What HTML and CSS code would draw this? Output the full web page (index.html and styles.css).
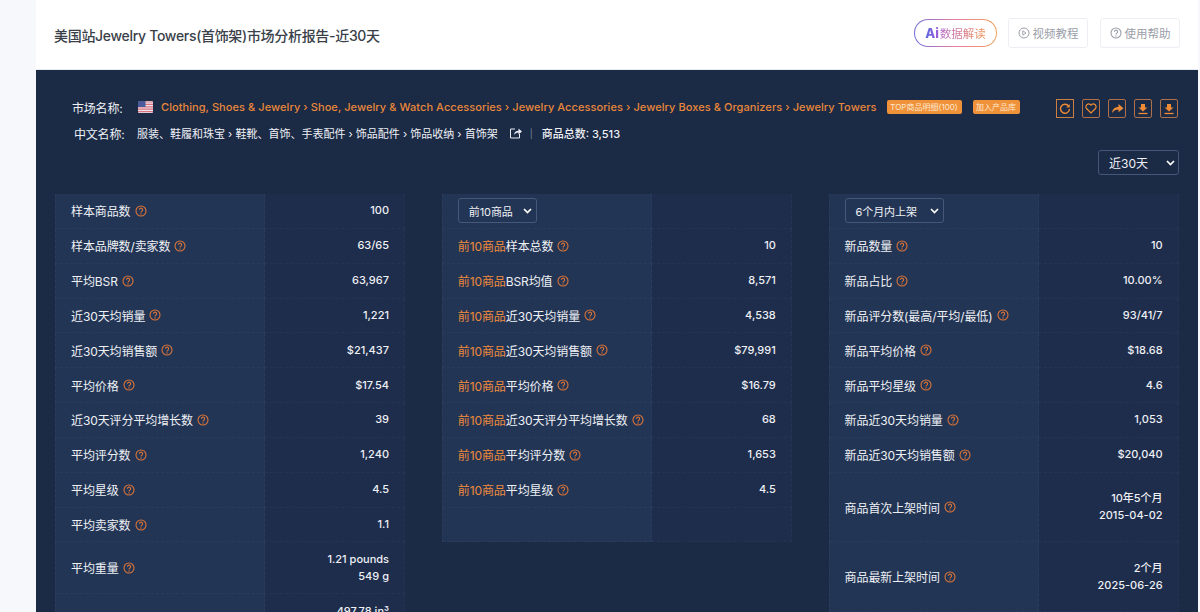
FILE: index.html
```html
<!DOCTYPE html>
<html lang="zh">
<head>
<meta charset="utf-8">
<title>Jewelry Towers</title>
<link rel="stylesheet" href="styles.css">
</head>
<body>
<svg class="defs" width="0" height="0" aria-hidden="true"><defs>
<symbol id="q" viewBox="0 0 12 12"><circle cx="6" cy="6" r="5" fill="none" stroke="currentColor" stroke-width="1.1"/><path d="M4.400 4.800a1.600 1.600 0 1 1 2.500 1.300c-.6.400-.9.700-.9 1.300" fill="none" stroke="currentColor" stroke-width="1.100"/><circle cx="6" cy="9" r=".7" fill="currentColor"/></symbol>
</defs></svg>
<div class="strip"></div>
<main class="main">
  <header class="top">
    <h1 class="title">美国站Jewelry Towers(首饰架)市场分析报告-近30天</h1>
    <div class="top-actions">
      <span class="ai-btn"><span class="ai-inner"><b class="ai-mark">Ai</b><span class="ai-text">数据解读</span></span></span>
      <span class="ghost-btn"><svg width="12" height="12" viewBox="0 0 12 12"><circle cx="6" cy="6" r="5" fill="none" stroke="currentColor"/><path d="M4.800 3.800 8 6 4.800 8.200z" fill="none" stroke="currentColor" stroke-width=".9"/></svg>视频教程</span>
      <span class="ghost-btn"><svg width="12" height="12"><use href="#q"/></svg>使用帮助</span>
    </div>
  </header>
  <section class="panel">
    <div class="info">
      <div class="info-lines">
        <div class="line">
          <span class="key key-a">市场名称:</span>
          <svg class="flag" width="15" height="12" viewBox="0 0 15 12"><rect width="15" height="12" rx="1" fill="#e9e3ea"/><path d="M0 1h15M0 3.400h15M0 5.800h15M0 8.200h15M0 10.600h15" stroke="#d9737f" stroke-width="1.200"/><rect width="7.500" height="6" fill="#4a5a9a"/></svg>
          <span class="crumbs">Clothing, Shoes &amp; Jewelry › Shoe, Jewelry &amp; Watch Accessories › Jewelry Accessories › Jewelry Boxes &amp; Organizers › Jewelry Towers</span>
          <span class="tag tag-top">TOP商品明细(100)</span>
          <span class="tag tag-add">加入产品库</span>
        </div>
        <div class="line line-cn">
          <span class="key">中文名称:</span>
          <span class="cn-crumbs">服装、鞋履和珠宝 › 鞋靴、首饰、手表配件 › 饰品配件 › 饰品收纳 › 首饰架</span>
          <svg class="share" width="13" height="12" viewBox="0 0 13 12"><path d="M6 2H1.500v9h9V7" fill="none" stroke="#e8ebf2" stroke-width="1"/><path d="M5 8c.3-3 2-4.300 4.500-4.300V1.500L13 4.600 9.500 7.500V5.500C7.500 5.500 6 6.500 5 8z" fill="#e8ebf2"/></svg>
          <span class="sep">|</span>
          <span class="total">商品总数: 3,513</span>
        </div>
      </div>
      <div class="tools">
        <span class="tool tool-sq"><svg width="12" height="12" viewBox="0 0 12 12"><path d="M9.700 3.200A4.500 4.500 0 1 0 10.500 6" fill="none" stroke="#f08c35" stroke-width="1.400"/><path d="M10.700 1v3.400H7.300z" fill="#f08c35"/></svg></span>
        <span class="tool"><svg width="12" height="11" viewBox="0 0 12 11"><path d="M6 10 1.500 5.500a2.700 2.700 0 0 1 4.500-3.300 2.700 2.700 0 0 1 4.500 3.300z" fill="none" stroke="#f08c35" stroke-width="1.200"/></svg></span>
        <span class="tool"><svg width="13" height="11" viewBox="0 0 13 11"><path d="M1 10c.4-4 3-6 6.500-6V1l5 4.300-5 4V6.500C5 6.500 2.500 7.500 1 10z" fill="#f08c35"/></svg></span>
        <span class="tool"><svg width="12" height="12" viewBox="0 0 12 12"><path d="M4 1h4v3.500h2.500L6 8.500 1.500 4.500H4z" fill="#f08c35"/><path d="M1.500 10.500h9" stroke="#f08c35" stroke-width="1.300"/></svg></span>
        <span class="tool"><svg width="12" height="12" viewBox="0 0 12 12"><path d="M4 1h4v3.500h2.500L6 8.500 1.500 4.500H4z" fill="#f08c35"/><path d="M1.500 10.500h9" stroke="#f08c35" stroke-width="1.300"/></svg></span>
      </div>
    </div>
    <div class="range-row"><span class="select select-range">近30天<svg class="chev" width="9" height="6" viewBox="0 0 9 6"><path d="M1 1l3.500 3.500L8 1" fill="none" stroke="#fff" stroke-width="1.700"/></svg></span></div>
    <div class="columns">
      <div class="grid grid-a">
        <div class="k">样本商品数<svg class="q"><use href="#q"/></svg></div><div class="v">100</div>
        <div class="k">样本品牌数/卖家数<svg class="q"><use href="#q"/></svg></div><div class="v">63/65</div>
        <div class="k">平均BSR<svg class="q"><use href="#q"/></svg></div><div class="v">63,967</div>
        <div class="k">近30天均销量<svg class="q"><use href="#q"/></svg></div><div class="v">1,221</div>
        <div class="k">近30天均销售额<svg class="q"><use href="#q"/></svg></div><div class="v">$21,437</div>
        <div class="k">平均价格<svg class="q"><use href="#q"/></svg></div><div class="v">$17.54</div>
        <div class="k">近30天评分平均增长数<svg class="q"><use href="#q"/></svg></div><div class="v">39</div>
        <div class="k">平均评分数<svg class="q"><use href="#q"/></svg></div><div class="v">1,240</div>
        <div class="k">平均星级<svg class="q"><use href="#q"/></svg></div><div class="v">4.5</div>
        <div class="k">平均卖家数<svg class="q"><use href="#q"/></svg></div><div class="v">1.1</div>
        <div class="k">平均重量<svg class="q"><use href="#q"/></svg></div><div class="v">1.21 pounds<br>549 g</div>
        <div class="k">平均体积<svg class="q"><use href="#q"/></svg></div><div class="v">497.78 in³<br>8157 cm³</div>
      </div>
      <div class="grid">
        <div class="k"><span class="select select-cell">前10商品<svg class="chev" width="9" height="6" viewBox="0 0 9 6"><path d="M1 1l3.500 3.500L8 1" fill="none" stroke="#fff" stroke-width="1.700"/></svg></span></div><div class="v"></div>
        <div class="k"><em>前10商品</em>样本总数<svg class="q"><use href="#q"/></svg></div><div class="v">10</div>
        <div class="k"><em>前10商品</em>BSR均值<svg class="q"><use href="#q"/></svg></div><div class="v">8,571</div>
        <div class="k"><em>前10商品</em>近30天均销量<svg class="q"><use href="#q"/></svg></div><div class="v">4,538</div>
        <div class="k"><em>前10商品</em>近30天均销售额<svg class="q"><use href="#q"/></svg></div><div class="v">$79,991</div>
        <div class="k"><em>前10商品</em>平均价格<svg class="q"><use href="#q"/></svg></div><div class="v">$16.79</div>
        <div class="k"><em>前10商品</em>近30天评分平均增长数<svg class="q"><use href="#q"/></svg></div><div class="v">68</div>
        <div class="k"><em>前10商品</em>平均评分数<svg class="q"><use href="#q"/></svg></div><div class="v">1,653</div>
        <div class="k"><em>前10商品</em>平均星级<svg class="q"><use href="#q"/></svg></div><div class="v">4.5</div>
        <div class="k"></div><div class="v"></div>
      </div>
      <div class="grid grid-c">
        <div class="k"><span class="select select-cell select-new">6个月内上架<svg class="chev" width="9" height="6" viewBox="0 0 9 6"><path d="M1 1l3.500 3.500L8 1" fill="none" stroke="#fff" stroke-width="1.700"/></svg></span></div><div class="v"></div>
        <div class="k">新品数量<svg class="q"><use href="#q"/></svg></div><div class="v">10</div>
        <div class="k">新品占比<svg class="q"><use href="#q"/></svg></div><div class="v">10.00%</div>
        <div class="k">新品评分数(最高/平均/最低)<svg class="q"><use href="#q"/></svg></div><div class="v">93/41/7</div>
        <div class="k">新品平均价格<svg class="q"><use href="#q"/></svg></div><div class="v">$18.68</div>
        <div class="k">新品平均星级<svg class="q"><use href="#q"/></svg></div><div class="v">4.6</div>
        <div class="k">新品近30天均销量<svg class="q"><use href="#q"/></svg></div><div class="v">1,053</div>
        <div class="k">新品近30天均销售额<svg class="q"><use href="#q"/></svg></div><div class="v">$20,040</div>
        <div class="k">商品首次上架时间<svg class="q"><use href="#q"/></svg></div><div class="v">10年5个月<br>2015-04-02</div>
        <div class="k">商品最新上架时间<svg class="q"><use href="#q"/></svg></div><div class="v">2个月<br>2025-06-26</div>
      </div>
    </div>
  </section>
</main>
<div class="edge"></div>
</body>
</html>
```
FILE: styles.css
```css
* { box-sizing: border-box; }
html, body { height: 612px; overflow: hidden; }
body {
  margin: 0;
  display: flex;
  background: #f7f8fc;
  font-family: Inter, "Noto Sans CJK SC", sans-serif;
  font-size: 12px;
  color: #e8ebf2;
}
.defs { position: absolute; }
.strip { width: 36px; flex: none; }
.edge { width: 2px; flex: none; }
.main { flex: 1; min-width: 0; display: flex; flex-direction: column; }
.top {
  height: 70px;
  flex: none;
  background: #fff;
  display: flex;
  align-items: center;
  justify-content: space-between;
  padding: 0 18px 0 18px;
  border-bottom: 1px solid #e8eaf0;
}
.title { margin: 0; font-size: 14px; font-weight: 500; color: #3a3f4a; letter-spacing: -.31px; }
.top-actions { display: flex; align-items: center; gap: 12px; margin-bottom: 3px; }
.ai-btn {
  width: 83px; height: 28px; padding: 1px; border-radius: 14px;
  background: linear-gradient(90deg, #6f6fd8, #e97fa0, #f0a35a);
  margin-right: -1px;
}
.ai-inner {
  display: flex; align-items: center; justify-content: center; height: 100%;
  background: #fff; border-radius: 13px; font-size: 11.5px;
  color: #dd6c8e;
}
.ai-mark {
  font-size: 13px; font-weight: 800; margin-right: 1px;
  background: linear-gradient(90deg, #5a6be0, #a05ad8);
  -webkit-background-clip: text; background-clip: text; color: transparent;
}
.ai-text { background: linear-gradient(90deg, #b565c8, #f09050); -webkit-background-clip: text; background-clip: text; color: transparent; }
.ghost-btn {
  height: 30px; width: 80px; border: 1px solid #eceef3; border-radius: 3px;
  display: flex; align-items: center; justify-content: center; gap: 3px;
  color: #9a9ea8; font-size: 11.5px;
}
.panel {
  flex: 1; min-height: 0; overflow: hidden;
  background: #1b2a45;
  padding: 0 19px;
}
.info { display: flex; justify-content: space-between; padding-top: 28px; }
.info-lines { display: flex; flex-direction: column; }
.line { display: flex; align-items: center; height: 18px; font-size: 11px; white-space: nowrap; padding-left: 17px; }
.line-cn { margin-top: 8px; padding-left: 19px; }
.key { width: 63px; flex: none; color: #eef0f5; font-size: 12px; letter-spacing: -.2px; }
.key-a { width: 66px; }
.flag { margin-right: 8px; flex: none; }
.crumbs { color: #e8873a; font-size: 11px; font-weight: 500; letter-spacing: .07px; }
.tag {
  height: 14px; line-height: 14px; border-radius: 2px; background: #f0923a; text-align: center;
  color: #fde8d2; font-size: 8px; margin-left: 10px;
}
.tag-top { width: 75px; }
.tag-add { width: 47px; margin-left: 11px; }
.cn-crumbs { color: #eef0f5; }
.share { margin-left: 11px; }
.sep { margin: 0 9px 0 8px; color: #7d8aa3; font-size: 9px; }
.total { color: #eef0f5; font-weight: 500; }
.tools { display: flex; gap: 7.5px; padding: 1px 1px 0 0; height: 20px; }
.tool {
  width: 18.4px; height: 19px; border: 1px solid #b0704a; border-radius: 2px;
  display: flex; align-items: center; justify-content: center;
}
.tool-sq { border-color: #c98040; border-radius: 0; }
.range-row { display: flex; justify-content: flex-end; margin-top: 8px; height: 25px; }
.select {
  display: inline-flex; align-items: center; justify-content: space-between;
  border: 1px solid #46587a; border-radius: 3px; color: #eef0f5;
}
.select-range { width: 81px; height: 25px; padding: 0 3px 0 10px; font-size: 12px; }
.select-cell { width: 79px; height: 25px; padding: 0 4px 0 10px; font-size: 11px; }
.select-new { width: 99px; }
.columns {
  margin-top: 19px;
  display: grid;
  grid-template-columns: 350px 350px 350px;
  column-gap: 36.8px;
  align-items: start;
}
.grid {
  display: grid;
  grid-template-columns: 210px 140px;
  grid-auto-rows: 34.85px;
}
.grid-a { grid-template-rows: repeat(10, 34.85px) 52px 52px; }
.grid-c { grid-template-rows: repeat(8, 34.85px) 69.7px 69.7px; }
.k, .v {
  display: flex; align-items: center;
  border-bottom: 1px dashed rgba(120, 140, 180, .08);
  border-right: 1px dashed rgba(120, 140, 180, .08);
}
.k { background: #233554; padding-left: 15px; color: #eef0f5; font-size: 12px; letter-spacing: -.1px; border-left: 1px dashed rgba(120, 140, 180, .08); }
.v {
  background: #1e2d4b; justify-content: flex-end; text-align: right; padding-right: 15px;
  font-size: 11px; font-weight: 500; color: #eef0f5; line-height: 17px;
}
em { font-style: normal; color: #ee8a3c; }
.q { width: 12px; height: 12px; margin-left: 4px; color: #d9743a; flex: none; }
```
